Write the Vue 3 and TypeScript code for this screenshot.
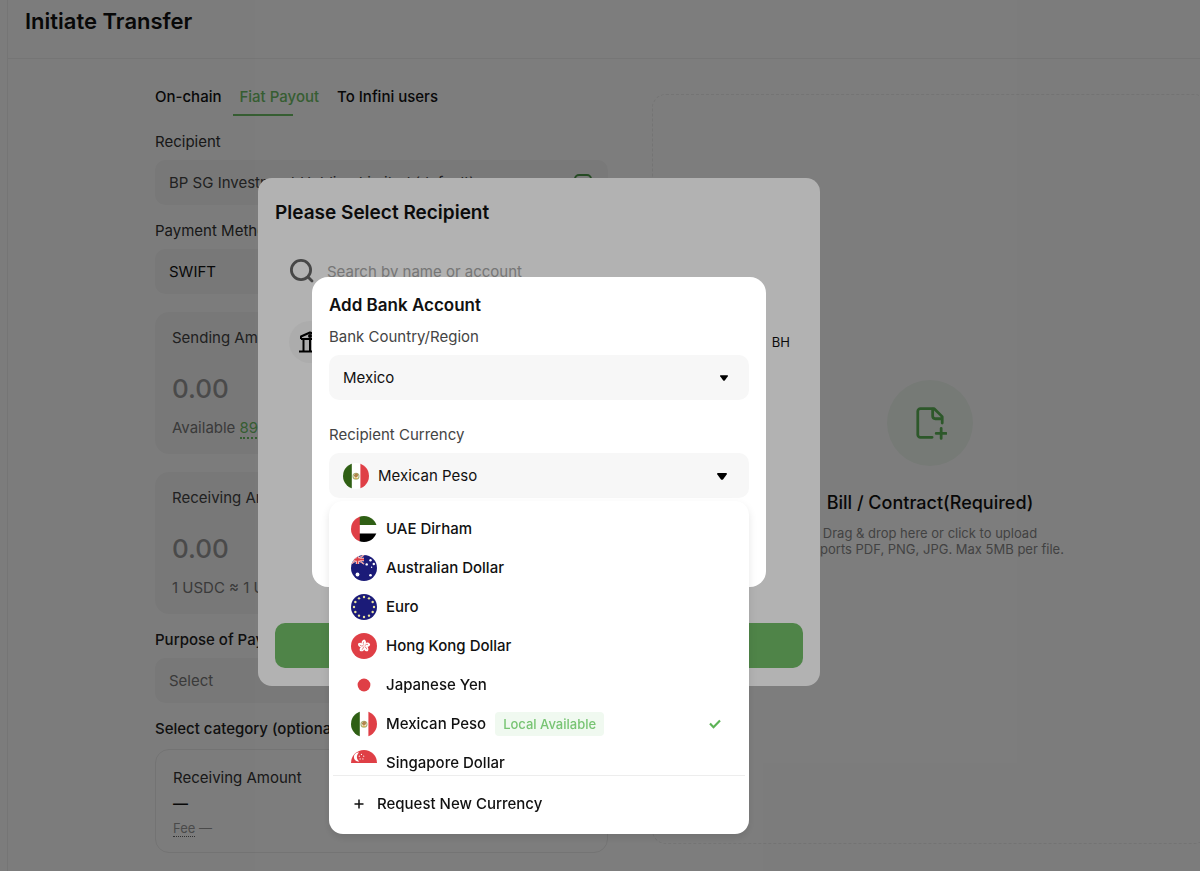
<script setup lang="ts">
import { ref } from 'vue'

type Tab = { id: string; label: string }
type Currency = { code: string; name: string; local?: boolean }

const tabs: Tab[] = [
  { id: 'chain', label: 'On-chain' },
  { id: 'fiat', label: 'Fiat Payout' },
  { id: 'users', label: 'To Infini users' },
]
const activeTab = ref('fiat')

const currencies: Currency[] = [
  { code: 'AED', name: 'UAE Dirham' },
  { code: 'AUD', name: 'Australian Dollar' },
  { code: 'EUR', name: 'Euro' },
  { code: 'HKD', name: 'Hong Kong Dollar' },
  { code: 'JPY', name: 'Japanese Yen' },
  { code: 'MXN', name: 'Mexican Peso', local: true },
  { code: 'SGD', name: 'Singapore Dollar' },
]
const selected = ref('MXN')

const ring = Array.from({ length: 12 }, (_, i) => {
  const a = (i * Math.PI) / 6
  return { x: 13 + 10 * Math.sin(a), y: 13 - 10 * Math.cos(a) }
})
const petals = [0, 72, 144, 216, 288]
const southern = [
  { x: 6.5, y: 19.5, r: 1.9 },
  { x: 19.5, y: 5.2, r: 1.2 },
  { x: 15.7, y: 9.4, r: 1.2 },
  { x: 22.8, y: 9, r: 1.2 },
  { x: 20.6, y: 12.3, r: 0.7 },
  { x: 19.5, y: 20.3, r: 1.3 },
]
</script>

<template>
  <div class="page">
    <header class="topbar">
      <h1>Initiate Transfer</h1>
    </header>
    <main class="content">
      <form class="form" @submit.prevent>
        <nav class="tabs">
          <button
            v-for="t in tabs"
            :key="t.id"
            type="button"
            :class="['tab', { active: activeTab === t.id }]"
            @click="activeTab = t.id"
          >{{ t.label }}</button>
        </nav>

        <label class="label" for="recipient">Recipient</label>
        <button id="recipient" type="button" class="field soft">
          <span>BP SG Investment Holding Limited (default)</span>
          <svg class="field-icon" width="18" height="18" viewBox="0 0 18 18" fill="none" stroke="#4f9a4a" stroke-width="2">
            <rect x="1" y="1" width="16" height="16" rx="4" />
            <path d="M5 6h8M5 9h8M5 12h5" />
          </svg>
        </button>

        <label class="label" for="method">Payment Method</label>
        <select id="method" class="field">
          <option>SWIFT</option>
        </select>

        <section class="amount">
          <label for="sending">Sending Amount</label>
          <input id="sending" type="text" placeholder="0.00" />
          <p>Available <a href="#">89,120.00</a></p>
        </section>
        <section class="amount">
          <label for="receiving">Receiving Amount</label>
          <input id="receiving" type="text" placeholder="0.00" />
          <p>1 USDC ≈ 1 USD</p>
        </section>

        <label class="label strong" for="purpose">Purpose of Payment</label>
        <select id="purpose" class="field muted">
          <option>Select</option>
        </select>

        <p class="label strong">Select category (optional)</p>
        <section class="summary">
          <h2>Receiving Amount</h2>
          <p class="total">—</p>
          <p class="fee"><abbr title="Fee">Fee</abbr> —</p>
        </section>
      </form>

      <label class="upload">
        <input type="file" class="hidden-file" />
        <span class="upload-icon">
          <svg width="34" height="34" viewBox="0 0 32 32" fill="none" stroke="#5cb356" stroke-width="2.6" stroke-linecap="round" stroke-linejoin="round">
            <path d="M18 29.500H7A2.500 2.500 0 0 1 4.500 27V5A2.500 2.500 0 0 1 7 2.500h13l7.500 7.500v6" />
            <path d="M18.500 3v6.500a2.500 2.500 0 0 0 2.500 2.500h6" />
            <path d="M26.500 21v9.500M21.800 25.800h9.400" />
          </svg>
        </span>
        <span class="upload-title">Bill / Contract(Required)</span>
        <span class="upload-hint">Drag &amp; drop here or click to upload<br />Supports PDF, PNG, JPG. Max 5MB per file.</span>
      </label>
    </main>

    <div class="overlay">
      <section class="picker" role="dialog" aria-labelledby="picker-title">
        <h2 id="picker-title">Please Select Recipient</h2>
        <label class="search">
          <svg width="24" height="24" viewBox="0 0 24 24" fill="none" stroke="#666" stroke-width="2.8" stroke-linecap="round">
            <circle cx="11" cy="11" r="9.6" />
            <path d="M18.500 18.500l3.500 3.500" />
          </svg>
          <input type="search" placeholder="Search by name or account" aria-label="Search by name or account" />
        </label>
        <div class="bank-row">
          <span class="bank-icon">
            <svg width="24" height="22" viewBox="0 0 24 22" fill="none" stroke="#000" stroke-width="2" stroke-linejoin="round">
              <path d="M1 20.500h22M3 8h18M3 8V5.500L12 1.500l9 4V8M5.500 8v12M12 8v12M18.500 8v12" />
              <circle cx="12" cy="5" r="1" />
            </svg>
          </span>
          <span>BH</span>
        </div>
        <button type="button" class="primary" aria-label="Add recipient"></button>
      </section>
    </div>

    <div class="overlay">
      <section class="account" role="dialog" aria-labelledby="account-title">
        <h2 id="account-title">Add Bank Account</h2>
        <label class="label" for="country">Bank Country/Region</label>
        <div class="control">
          <select id="country" class="field">
            <option>Mexico</option>
          </select>
          <svg class="caret small" width="8" height="6" viewBox="0 0 10 7"><path d="M1 0h8q1.500 0 .8 1.200L6.200 6.200q-1.200 1.300-2.400 0L.2 1.200Q-.5 0 1 0z" /></svg>
        </div>
        <label class="label second" for="currency">Recipient Currency</label>
        <div class="control">
          <button id="currency" type="button" class="field pick" aria-haspopup="listbox" aria-expanded="true">
            <svg class="flag" viewBox="0 0 26 26"><use href="#flag-MXN" /></svg>
            Mexican Peso
          </button>
          <svg class="caret" width="10" height="7" viewBox="0 0 10 7"><path d="M1 0h8q1.500 0 .8 1.200L6.200 6.200q-1.200 1.300-2.400 0L.2 1.200Q-.5 0 1 0z" /></svg>

          <div class="menu">
            <ul role="listbox" aria-label="Recipient Currency">
              <li
                v-for="c in currencies"
                :key="c.code"
                role="option"
                :aria-selected="selected === c.code"
                @click="selected = c.code"
              >
                <svg class="flag" viewBox="0 0 26 26"><use :href="'#flag-' + c.code" /></svg>
                <span>{{ c.name }}</span>
                <span v-if="c.local" class="badge">Local Available</span>
                <svg v-if="selected === c.code" class="check" width="12" height="10" viewBox="0 0 12 10" fill="none" stroke="#5cb356" stroke-width="2.200">
                  <path d="M1 4.600l3.500 3.600L11 1.500" />
                </svg>
              </li>
            </ul>
            <button type="button" class="request">
              <svg width="10" height="10" viewBox="0 0 10 10" stroke="#111" stroke-width="1.500"><path d="M5 .5v9M.5 5h9" /></svg>
              Request New Currency
            </button>
          </div>
        </div>
      </section>
    </div>

    <svg class="defs" aria-hidden="true">
      <defs>
        <clipPath id="round"><circle cx="13" cy="13" r="13" /></clipPath>
        <g id="flag-AED" clip-path="url(#round)">
          <path fill="#fff" d="M0 0h26v26H0z" />
          <path fill="#2f5f14" d="M8 0h18v9H8z" />
          <path fill="#000" d="M8 17.500h18V26H8z" />
          <path fill="#df3f46" d="M0 0h8.800v26H0z" />
        </g>
        <g id="flag-AUD" clip-path="url(#round)">
          <path fill="#1b1b78" d="M0 0h26v26H0z" />
          <path fill="none" stroke="#fff" stroke-width="1.500" d="M0 0l13 9M13 0L0 9" />
          <path fill="none" stroke="#fff" stroke-width="3.400" d="M6.500 0v9M0 4.500h13" />
          <path fill="none" stroke="#df3f46" stroke-width=".7" d="M0 0l13 9M13 0L0 9" />
          <path fill="none" stroke="#df3f46" stroke-width="1.800" d="M6.500 0v9M0 4.500h13" />
          <circle v-for="(s, i) in southern" :key="i" :cx="s.x" :cy="s.y" :r="s.r" fill="#fff" />
        </g>
        <g id="flag-EUR" clip-path="url(#round)">
          <path fill="#1b1b78" d="M0 0h26v26H0z" />
          <circle v-for="(s, i) in ring" :key="i" :cx="s.x" :cy="s.y" r="1.200" fill="#e9e4a0" />
        </g>
        <g id="flag-HKD" clip-path="url(#round)">
          <path fill="#df3f46" d="M0 0h26v26H0z" />
          <g v-for="p in petals" :key="p" :transform="`rotate(${p} 13 13)`">
            <path fill="#fff" d="M13 13C9.600 11.500 10 7.400 13.200 6.600c2.500 1.100 2.300 4.400-.2 6.400z" />
            <path fill="none" stroke="#df3f46" stroke-width=".6" d="M13 12.200q-1.400-1.800-.3-3.500" />
          </g>
        </g>
        <g id="flag-JPY" clip-path="url(#round)">
          <path fill="#fff" d="M0 0h26v26H0z" />
          <circle cx="13" cy="13" r="6.400" fill="#df3f46" />
        </g>
        <g id="flag-MXN" clip-path="url(#round)">
          <path fill="#fff" d="M0 0h26v26H0z" />
          <path fill="#2f5f14" d="M0 0h8.800v26H0z" />
          <path fill="#df3f46" d="M17.400 0H26v26h-8.600z" />
          <circle cx="13" cy="13.200" r="3" fill="none" stroke="#a9b57c" stroke-width="1.100" />
          <path fill="#b0844c" d="M10.800 12.500q1.200-3 3.400-2.200 1.800 1.500.4 3.400l-2.600.8z" />
          <path fill="#d9a53a" d="M11.500 14.500h3v1.300h-3z" />
        </g>
        <g id="flag-SGD" clip-path="url(#round)">
          <path fill="#fff" d="M0 0h26v26H0z" />
          <path fill="#df3f46" d="M0 0h26v13H0z" />
          <path fill="#fff" d="M8.300 2.600a4.500 4.500 0 1 0 0 8.800 5.200 5.200 0 0 1 0-8.800z" />
          <g fill="#fff">
            <circle cx="10.500" cy="4.400" r=".6" /><circle cx="8.300" cy="6.200" r=".6" /><circle cx="12.700" cy="6.200" r=".6" />
            <circle cx="9.100" cy="8.900" r=".6" /><circle cx="11.900" cy="8.900" r=".6" />
          </g>
        </g>
      </defs>
    </svg>
  </div>
</template>

<style>
body {
  margin: 0;
  background: #fff;
}
</style>

<style scoped>
* {
  box-sizing: border-box;
}
.page {
  min-height: 100vh;
  margin-left: 7px;
  border-left: 1px solid #f0f0f0;
  overflow: hidden;
  font-family: Inter, "Liberation Sans", sans-serif;
  font-size: 15px;
  line-height: 20px;
  color: #111;
}
h1, h2, p, ul {
  margin: 0;
  padding: 0;
}
button, input, select {
  font: inherit;
  color: inherit;
  border: 0;
  background: none;
  padding: 0;
  outline: 0;
  appearance: none;
}
.topbar {
  height: 59px;
  padding: 8px 17px;
  border-bottom: 1px solid #f0f0f0;
}
h1 {
  font-size: 22px;
  line-height: 26px;
  font-weight: 600;
}
.content {
  display: grid;
  grid-template-columns: minmax(0, 453fr) minmax(0, 556fr);
  gap: 44px;
  margin: 0 -8px 0 147px;
  padding-bottom: 18px;
}
.form {
  display: flex;
  flex-direction: column;
}
.tabs {
  display: flex;
  gap: 18px;
  padding-top: 28px;
  margin-bottom: 16px;
}
.tab {
  position: relative;
  height: 29px;
  padding-bottom: 9px;
  font-weight: 500;
}
.tab.active {
  color: #6fbf67;
}
.tab.active::after {
  content: "";
  position: absolute;
  left: -6px;
  bottom: 0;
  width: 60px;
  height: 2px;
  background: #6fbf67;
}
.label {
  color: #444;
  margin-bottom: 8px;
}
.form .label {
  color: #333;
}
.form .label.strong {
  color: #222;
  font-weight: 500;
}
.field {
  display: flex;
  align-items: center;
  width: 100%;
  height: 45px;
  padding: 0 14px;
  border-radius: 10px;
  background: #f7f7f7;
  text-align: left;
}
.form .field {
  margin-bottom: 16px;
}
.field.soft {
  justify-content: space-between;
  color: #444;
}
.form .field.muted {
  color: #777;
}
.field-icon {
  margin-right: 2px;
}
.amount {
  display: flex;
  flex-direction: column;
  height: 142px;
  margin: 2px 0 16px;
  padding: 16px 17px;
  border-radius: 14px;
  background: #f7f7f7;
}
.amount label {
  color: #444;
}
.amount input {
  width: 100%;
  height: 32px;
  margin: 24px 0 14px;
  font-size: 26px;
  font-weight: 500;
}
.amount input::placeholder {
  color: #999;
}
.amount p {
  color: #777;
}
.amount a {
  color: #6fbf67;
  text-decoration: none;
  border-bottom: 2px dotted #6fbf67;
}
.summary {
  margin-top: 2px;
  height: 104px;
  padding: 18px 17px;
  border: 1px solid #ececec;
  border-radius: 14px;
}
.summary h2 {
  font-size: 15px;
  font-weight: 400;
  color: #333;
}
.total {
  line-height: 32px;
  font-weight: 600;
}
.fee {
  font-size: 13px;
  line-height: 16px;
  color: #999;
}
.fee abbr {
  display: inline-block;
  text-decoration: none;
  border-bottom: 1px dotted #666;
}
.upload {
  display: flex;
  flex-direction: column;
  align-items: center;
  margin: 35px 0 9px;
  padding-top: 285px;
  border: 1px dashed #ececec;
  border-radius: 14px;
  text-align: center;
}
.hidden-file {
  position: absolute;
  opacity: 0;
  width: 1px;
  height: 1px;
}
.upload-icon {
  display: grid;
  place-items: center;
  width: 86px;
  height: 86px;
  border-radius: 50%;
  background: #f1f8f1;
}
.upload-title {
  margin-top: 25px;
  font-size: 18px;
  line-height: 24px;
  font-weight: 500;
}
.upload-hint {
  margin-top: 10px;
  font-size: 13px;
  line-height: 16px;
  color: #888;
}
.overlay {
  position: fixed;
  inset: 0;
  display: flex;
  align-items: center;
  justify-content: center;
  padding: 0 122px 7px 0;
  background: rgba(0, 0, 0, 0.3);
}
.picker {
  display: flex;
  flex-direction: column;
  width: 562px;
  height: 508px;
  padding: 23px 17px 18px;
  border-radius: 14px;
  background: #fff;
}
.picker h2 {
  font-size: 19px;
  line-height: 24px;
  font-weight: 600;
}
.search {
  display: flex;
  align-items: center;
  gap: 13px;
  margin-top: 34px;
  padding-left: 15px;
}
.search input {
  flex: 1;
  height: 24px;
}
.search input::placeholder {
  color: #aaa;
}
.bank-row {
  display: flex;
  align-items: center;
  justify-content: space-between;
  margin-top: 38px;
  padding: 0 13px 0 14px;
  font-size: 13px;
}
.bank-icon {
  display: grid;
  place-items: center;
  width: 42px;
  height: 42px;
  border-radius: 50%;
  background: #f7f7f7;
}
.primary {
  height: 45px;
  margin-top: auto;
  border-radius: 10px;
  background: #71be67;
}
.account {
  width: 454px;
  padding: 18px 17px 89px;
  border-radius: 16px;
  background: #fff;
}
.account h2 {
  margin-bottom: 12px;
  font-size: 17px;
  line-height: 20px;
  font-weight: 600;
}
.account .label {
  display: block;
}
.account .second {
  margin-top: 25px;
}
.control {
  position: relative;
}
.caret {
  position: absolute;
  right: 22px;
  top: 20px;
}
.caret.small {
  right: 21px;
}
.field.pick {
  gap: 9px;
}
.flag {
  flex: none;
  width: 26px;
  height: 26px;
}
.menu {
  position: absolute;
  top: 48px;
  left: 0;
  right: 0;
  padding-top: 8px;
  border-radius: 14px;
  background: #fff;
  box-shadow: 0 4px 8px rgba(0, 0, 0, 0.1);
}
.menu ul {
  height: 267px;
  margin: 0 4px;
  overflow-y: auto;
  scrollbar-width: none;
  list-style: none;
  border-bottom: 1px solid #ededed;
}
.menu li {
  display: flex;
  align-items: center;
  gap: 9px;
  height: 39px;
  padding: 0 24px 0 18px;
  font-weight: 500;
}
.badge {
  padding: 2px 8px;
  border-radius: 4px;
  background: #f0f9f0;
  color: #78c473;
  font-size: 13px;
}
.check {
  margin-left: auto;
}
.request {
  display: flex;
  align-items: center;
  gap: 13px;
  width: 100%;
  height: 58px;
  padding: 0 25px 2px;
  font-weight: 500;
}
.defs {
  position: absolute;
  width: 0;
  height: 0;
}
</style>
